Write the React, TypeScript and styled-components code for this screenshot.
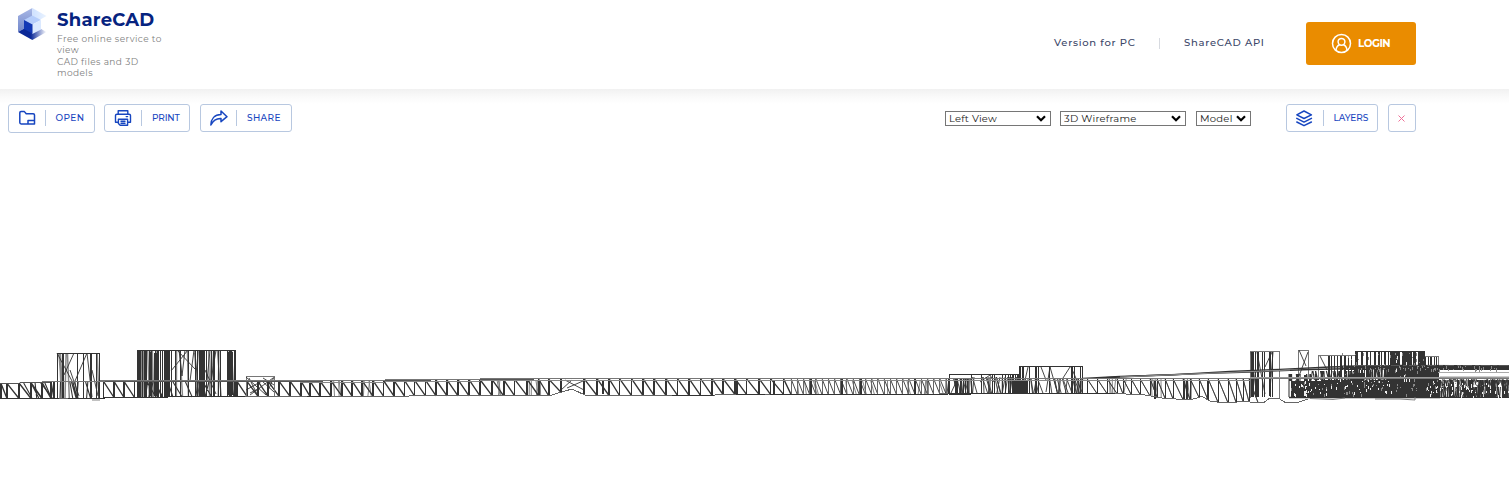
import React from "react";
import styled, { createGlobalStyle } from "styled-components";

const GlobalStyle = createGlobalStyle`
  html, body { margin: 0; background: #fff; overflow: hidden; }
  body { font-family: Montserrat, Inter, "Open Sans", sans-serif; }
  * { box-sizing: border-box; }
`;

const Page = styled.div`
  display: flex;
  flex-direction: column;
  width: 100%;
  height: 487px;
`;
const Header = styled.header`
  display: flex;
  flex: 0 0 89px;
  padding: 0 93px 0 17px;
`;
const Brand = styled.a`
  display: flex;
  align-items: flex-start;
  gap: 10px;
  padding-top: 8px;
`;
const BrandText = styled.div`
  display: flex;
  flex-direction: column;
  width: 125px;
`;
const BrandName = styled.strong`
  height: 25px;
  padding-top: 1px;
  color: #06237f;
  font-size: 18px;
  font-weight: 700;
  line-height: 22px;
  letter-spacing: 0.25px;
`;
const Tagline = styled.span<{ $spacing: number }>`
  color: #808080;
  font-size: 9px;
  line-height: 11.4px;
  letter-spacing: ${(p) => p.$spacing}px;
  white-space: nowrap;
`;
const Nav = styled.nav`
  display: flex;
  align-items: center;
  height: 43px;
  margin: 22px 0 0 auto;
`;
const NavLink = styled.a<{ $width: number; $spacing: number }>`
  width: ${(p) => p.$width}px;
  color: #3b4668;
  font-size: 10px;
  font-weight: 500;
  letter-spacing: ${(p) => p.$spacing}px;
  line-height: 14px;
  padding-bottom: 1px;
  white-space: nowrap;
`;
const NavDivider = styled.i`
  width: 1px;
  height: 11px;
  margin: 0 24px;
  background: #d7dae0;
`;
const LoginButton = styled.button`
  display: flex;
  align-items: center;
  gap: 6px;
  width: 110px;
  height: 43px;
  margin-left: 41px;
  padding: 0 0 0 25px;
  border: 0;
  border-radius: 3px;
  background: #ea8c00;
  color: #fff;
  font: 700 10.3px Montserrat, Inter, sans-serif;
  letter-spacing: -0.45px;
`;
const Toolbar = styled.div`
  display: flex;
  flex: 0 0 51px;
  align-items: flex-start;
  padding: 15px 93px 0 8px;
  background: linear-gradient(#f1f1f1, #fafafa 8px, #fff 15px);
`;
const ToolButton = styled.button<{ $width: number; $height?: number; $gap?: number }>`
  display: flex;
  align-items: center;
  width: ${(p) => p.$width}px;
  height: ${(p) => p.$height ?? 28}px;
  margin-right: ${(p) => p.$gap ?? 0}px;
  padding: 0 0 ${(p) => (p.$height ? 1 : 0)}px 9px;
  border: 1px solid #b8c8e0;
  border-radius: 3px;
  background: #fff;
  color: #1746c0;
`;
const ToolLabel = styled.span<{ $spacing: number; $indent?: number; $offset?: number }>`
  height: 16px;
  margin-left: ${(p) => p.$offset ?? 9}px;
  padding-left: ${(p) => p.$indent ?? 9}px;
  border-left: 1px solid #b8c8e0;
  font: 500 9px/15px Montserrat, Inter, sans-serif;
  letter-spacing: ${(p) => p.$spacing}px;
`;
const CloseButton = styled(ToolButton)`
  justify-content: center;
  padding: 0 1px 0 0;
`;
const Selects = styled.div`
  display: flex;
  margin: 7px 35px 0 auto;
`;
const SelectBox = styled.label<{ $width: number; $gap: number }>`
  display: flex;
  align-items: center;
  width: ${(p) => p.$width}px;
  height: 15px;
  margin-right: ${(p) => p.$gap}px;
  padding: 0 4px 0 3px;
  border: 1px solid #767676;
  background: #fff;
`;
const ViewSelect = styled.select<{ $spacing: number }>`
  flex: 1;
  min-width: 0;
  height: 13px;
  padding: 0;
  border: 0;
  outline: 0;
  appearance: none;
  background: none;
  color: #222;
  font: 400 10px/13px Montserrat, Inter, sans-serif;
  letter-spacing: ${(p) => p.$spacing}px;
`;
const Viewer = styled.main`
  display: flex;
  flex: 1;
  padding-top: 200px;
`;
const Drawing = styled.svg`
  display: block;
  width: 1509px;
  height: 70px;
  flex: none;
`;

function Logo() {
  return (
    <svg width="30" height="33" viewBox="0 0 30 33">
      <defs>
        <linearGradient id="floor" x1="0" x2="1">
          <stop offset=".45" stopColor="#0b2998" />
          <stop offset="1" stopColor="#fff" />
        </linearGradient>
        <linearGradient id="wall" x1="0" y1="0" x2="0" y2="1">
          <stop stopColor="#a9b8e5" />
          <stop offset="1" stopColor="#7187cb" />
        </linearGradient>
        <linearGradient id="roof" x1="0" x2="1">
          <stop stopColor="#cfe1ff" />
          <stop offset=".5" stopColor="#dceaff" />
          <stop offset="1" stopColor="#eaf3ff" />
        </linearGradient>
      </defs>
      <path d="M1 8 15.3 0v16L1 24Z" fill="url(#wall)" />
      <path d="M15.3 0 29.5 8 15.3 16Z" fill="url(#roof)" />
      <path d="M1 24 15.3 16 29.5 24 15.3 32Z" fill="url(#floor)" />
      <path d="m7 12 8.3-4.5 8.7 4.5-8.7 4.5Z" fill="#b5cdfb" />
      <path d="m15.3 16.5 8.7-4.5v9.5l-8.7 4.5Z" fill="#dbe9ff" />
      <path d="m7 12 8.3 4.5v9L7 21Z" fill="#1238b5" />
    </svg>
  );
}

const line = { fill: "none", stroke: "currentColor", strokeWidth: 1.5, strokeLinejoin: "round", strokeLinecap: "round" } as const;

const FolderIcon = () => (
  <svg width="18" height="16" viewBox="0 0 18 16" {...line}>
    <path d="M10 14H3.2Q1.8 14 1.8 12.6V2.8Q1.8 1.6 3 1.6h3.4l1.8 2.2h7q1.3 0 1.3 1.2V14H10V10.4h6.5" />
  </svg>
);
const PrinterIcon = () => (
  <svg width="18" height="16" viewBox="0 0 18 16" {...line} strokeWidth={1.4}>
    <path d="M4.2 4V.8h9.6V4M4 12.2H1.5V5.6q0-1.4 1.4-1.4h12.2q1.4 0 1.4 1.4v6.6h-2.7M4.4 9.2h9.2v6.1H6.2l-1.8-1.8ZM7 11.3h4M7 13.3h4M12.2 6.6h1.4" />
  </svg>
);
const ShareIcon = () => (
  <svg width="18" height="16" viewBox="0 0 18 16" {...line}>
    <path d="M.9 15C1 8.8 4.6 4.5 11 4.4V1l6 5.7-6 5V8.4C6.3 8.2 3 10.5.9 15Z" />
  </svg>
);
const LayersIcon = () => (
  <svg width="18" height="17" viewBox="0 0 18 17" {...line}>
    <path d="m8 1 7.4 3.8L8 8.5.8 4.8ZM.8 8.4 8 12.1l7.4-3.7M.8 12 8 15.7l7.4-3.7" />
  </svg>
);
const UserIcon = () => (
  <svg width="21" height="21" viewBox="0 0 21 21" {...line}>
    <circle cx="10.5" cy="10.5" r="9" />
    <circle cx="10.5" cy="8.8" r="3.4" />
    <path d="M5 17.4c.3-3.2 1.7-5 3.5-5.6M16 17.4c-.3-3.2-1.7-5-3.5-5.6" />
  </svg>
);
const Chevron = () => (
  <svg width="10" height="7" viewBox="0 0 10 7" fill="none" stroke="#000" strokeWidth="2.2">
    <path d="m1 1.3 4 4 4-4" />
  </svg>
);

function Dropdown({ label, width, gap, spacing }: { label: string; width: number; gap: number; spacing: number }) {
  return (
    <SelectBox $width={width} $gap={gap}>
      <ViewSelect $spacing={spacing}><option>{label}</option></ViewSelect>
      <Chevron />
    </SelectBox>
  );
}

let seed = 71;
const rnd = () => {
  seed = (seed * 16807) % 2147483647;
  return seed / 2147483647;
};
const seg = (a: number, b: number, c: number, d: number) =>
  `M${a.toFixed(1)} ${b.toFixed(1)}L${c.toFixed(1)} ${d.toFixed(1)}`;

type Profile = [number, number][];
const at = (p: Profile, x: number) => {
  for (let i = 1; i < p.length; i++) {
    if (x <= p[i][0]) {
      const [a, b] = p[i - 1];
      const [c, d] = p[i];
      return b + ((d - b) * (x - a)) / (c - a);
    }
  }
  return p[p.length - 1][1];
};
const poly = (p: Profile) => "M" + p.map(([x, y]) => `${x} ${y}`).join("L");

const top: Profile = [[0, 383.5], [40, 382.5], [60, 381.5], [300, 381.2], [385, 380.5], [480, 379.5], [580, 378.6], [1509, 378.6]];
const bottom: Profile = [
  [0, 398.5], [100, 398.5], [106, 397.5], [165, 397.5], [170, 396.5], [300, 396.4], [550, 395.5], [572, 389], [586, 395.5], [714, 395.4], [716, 394.5],
  [770, 394.4], [930, 394.4], [948, 393.6], [1113, 393.6], [1142, 394.5], [1162, 398], [1190, 400], [1202, 396.5], [1210, 401], [1220, 402.5],
  [1230, 403], [1245, 401], [1252, 402.5], [1264, 402.5], [1270, 398], [1279, 398.5], [1286, 403], [1298, 402.5], [1308, 399],
];

const posts = [
  1, 7, 19, 31, 42, 51, 54, 103.5, 114, 124, 134.5, 237, 247, 258, 268, 279, 290,
  301, 310, 320, 331, 342, 352, 362, 373, 383.5, 394, 404.5, 414.5, 425.5, 436, 447, 458, 469, 480, 492, 503.5, 514.5,
  527, 538.5, 548.5, 561, 584, 597, 609, 619.5, 631.5, 643, 654, 666, 677.5, 689, 700.5, 712, 723, 735, 746.5, 759, 770.5, 783.5,
];
for (let x = 791; x < 948; x += 6.2) posts.push(x);
posts.push(948, 1087, 1097, 1107, 1117, 1123, 1131, 1140, 1150, 1157, 1165, 1173, 1183, 1190, 1199, 1208, 1218, 1228, 1236, 1243, 1249);

const postLines = (from: number, to: number) =>
  posts.filter((x) => x >= from && x < to).map((x) => seg(x, at(top, x), x, at(bottom, x))).join("");
const diagonalLines = (from: number, to: number) =>
  posts
    .map((x, i) => {
      const next = posts[i + 1] ?? x + 9;
      return x >= from && x < to && next - x < 15 ? seg(x, at(top, x), next, at(bottom, next)) : "";
    })
    .join("");

const hatch = (x0: number, x1: number, y0: number, y1: number, n: number, lean: number) => {
  let d = "";
  for (let i = 0; i < n; i++) {
    const x = x0 + rnd() * (x1 - x0);
    const end = Math.max(x0, Math.min(x1, x + (rnd() - 0.35) * lean));
    d += seg(x, y0, end, y1);
  }
  return d;
};

const verticals = (xs: number[], y0: number, y1: number) => xs.map((x) => seg(x, y0, x, y1)).join("");

const darkPosts =
  verticals([62.5, 63.5, 77.5, 83, 90, 91, 96, 99.5], 353, 398) +
  verticals([137.5, 138.5, 140, 142, 144, 146, 149.5, 151.5, 155, 157, 158, 160, 162, 164, 165, 166, 167, 168, 169], 350, 397) +
  verticals([171.5, 175, 180, 188, 195, 197, 199.5, 201, 202, 203, 204, 206, 211, 213, 214, 218, 220, 227, 229, 230, 231, 234.5], 350, 396) +
  verticals([1019.5, 1020.5, 1022, 1023, 1029, 1035, 1036, 1038, 1049, 1071, 1072, 1074, 1080, 1082.5], 366, 394) +
  verticals([949, 971, 981, 992, 994, 1002, 1005, 1008, 1010, 1012, 1013, 1015, 1017, 1018], 374, 394) +
  verticals([955, 956, 957, 960, 963, 965, 967], 378, 393) +
  verticals([1250, 1251, 1252, 1253, 1255, 1257, 1258, 1262, 1264, 1270, 1272, 1279.5], 351, 397) +
  verticals([1298.5, 1308], 350, 378) +
  verticals([1318, 1328, 1329, 1331, 1334, 1337, 1340, 1341, 1344, 1345, 1348, 1351], 355, 380) +
  verticals([1355, 1356, 1357, 1361, 1362, 1366, 1367, 1370, 1374, 1375, 1378, 1379, 1381, 1384, 1385, 1388, 1390, 1391, 1392, 1394, 1395], 351, 378) +
  verticals([1425, 1428, 1430, 1431, 1434, 1436, 1438.5], 356, 378);

const accents =
  verticals([602.5, 722.8, 737, 773.5], 380, 394) + verticals([503.5, 538.8, 548.7, 583.5], 380, 395) +
  verticals([810.5, 842, 860.5, 915], 379, 394) + verticals([1184, 1187, 1155, 1208], 380, 399);

const outlines =
  "M57 399V353H99.5V399M137 397V350.5H235V396M949 394V374.5H1020M1019.5 394V366.5H1082.5V394" +
  "M1355 378V351.5H1424.5V378";
const softOutlines =
  "M246 396V376.5H274V396M1250 398V351.5H1279.5V398M1298.5 378V350.5H1308V378M1318 378V355.5H1355M1424 356.5H1438.5V378";

const looseLines =
  "M57 353L72 381M64 375L74 353M70 370L79 396M75 381L87 353M87 353L92 397M92 370L98 396M171 371L188 350M177 350L195 369M179 350L182 376L185 350M190 381L194 350M195 353L199 396" +
  "M207 381L210 350M205 370L216 394M216 350L211 381M246 377L266 395L274 377M246 390L262 381L274 392M250 395L273 378M249 378L258 396M263 378L274 385" +
  "M250 393L260 388M572 380L561 390M583 381L567 388M565 380L584 390M951 393L957 380M980 382L990 375L994 382M1023 389L1028 367M1041 367L1046 380M1046 392L1050 367L1057 391M1063 378L1070 367M1071 367L1082 392" +
  "M1251 352L1256 390M1257 352L1265 394M1265 367L1272 352M1273 352L1270 390M1299 376L1308 352M1299 350L1306 366M1320 356L1327 370";

const chordRising: Profile = [[1083, 378.5], [1120, 376.5], [1170, 375], [1230, 371.5], [1280, 369.3], [1330, 367], [1400, 365.5], [1509, 366]];
const chordRising2: Profile = [[1100, 378], [1150, 375.5], [1200, 373.7], [1250, 372], [1310, 369.5], [1380, 368], [1509, 369]];

const blocks: [number, number, number, number][] = [
  [139, 351, 2, 46], [144, 351, 3, 46], [149, 352, 3, 44], [154, 353, 4, 43], [164, 351, 6, 46], [200, 351, 5, 45], [227, 352, 6, 43],
  [1013, 381, 15, 12], [1017, 375, 3, 7], [1256, 379, 3, 18], [1269, 352, 2, 44], [1291, 381, 31, 17], [1289, 374, 3, 7], [1297, 374, 2, 8], [1304, 375, 3, 6],
  [1321, 380, 119, 18], [1353, 373, 12, 24], [1390, 352, 10, 45], [1402, 352, 10, 45], [1387, 370, 37, 10], [1413, 351, 3, 30], [1418, 352, 6, 28], [1424, 366, 15, 32],
];

const clutter =
  hatch(1289, 1322, 374, 397, 18, 6) + hatch(1310, 1355, 371, 380, 32, 4) + hatch(1354, 1392, 368, 382, 34, 4) +
  hatch(1440, 1509, 380, 397, 85, 4) + hatch(1440, 1509, 387, 398, 60, 3);

const fringe = Array.from({ length: 32 }, (_, i) => {
  const x = 1440 + i * 2.2;
  const y = 376 + rnd() * 6;
  return seg(x, y + 4, x + 1, y) + seg(x + 1, y, x + 3, y + 6);
}).join("");

const speckle = (n: number, x0: number, w: number, y0: number, h: number) =>
  Array.from({ length: n }, () => {
    const x = x0 + Math.floor(rnd() * w) + 0.5;
    const y = y0 + Math.floor(rnd() * h);
    return `M${x} ${y}v${1 + Math.floor(rnd() * 3)}`;
  }).join("");
const whiteSpecks = speckle(28, 1292, 36, 381, 14) + speckle(32, 1330, 65, 379, 15) + speckle(8, 1396, 22, 353, 30) + speckle(12, 1425, 15, 380, 16) + speckle(45, 1440, 69, 382, 15);
const graySpecks = speckle(75, 1291, 215, 379, 16) + speckle(35, 1340, 84, 353, 24) + speckle(60, 1340, 165, 366, 4);

function BridgeDrawing() {
  return (
    <Drawing viewBox="0 340 1509 70" fill="none" stroke="#333" strokeWidth=".9" role="img" aria-label="Wireframe model">
      <path d={hatch(59, 99, 354, 398, 6, 7)} stroke="#888" strokeWidth="1.5" />
      <path d={hatch(138, 169, 351, 397, 10, 3)} stroke="#888" strokeWidth="1.4" />
      <path d={hatch(170, 234, 351, 396, 13, 6)} stroke="#888" strokeWidth="1.4" />
      <path d={hatch(951, 972, 379, 393, 14, 6) + hatch(972, 1018, 377, 393, 20, 10)} />
      <path d={hatch(1021, 1082, 378, 393, 26, 9)} />
      <path d={hatch(20, 57, 383, 398, 6, 20) + hatch(60, 99, 382, 398, 9, 10) + hatch(140, 234, 382, 397, 14, 15)} strokeWidth="1.1" />
      <path d={hatch(787, 948, 380, 394, 18, 8)} stroke="#777" />
      <path d={hatch(332, 341, 381, 396, 3, 5) + hatch(362, 372, 381, 396, 3, 5) + hatch(492, 502, 380, 395, 3, 5) + hatch(528, 548, 380, 395, 5, 5) + hatch(1109, 1128, 379, 393, 5, 7) + hatch(1150, 1165, 379, 397, 4, 5) + hatch(1183, 1192, 379, 399, 4, 5)} stroke="#777" />
      <path d={diagonalLines(0, 784)} strokeWidth="1.35" />
      <path d={diagonalLines(784, 1300)} strokeWidth=".9" />
      <path d={diagonalLines(1083, 1300)} strokeWidth=".6" />
      <g shapeRendering="crispEdges">
        <path d={postLines(0, 784)} strokeWidth="1.2" />
        <path d={postLines(784, 948)} stroke="#666" strokeWidth="1" />
        <path d={postLines(948, 1300)} strokeWidth="1" />
        <path d={darkPosts} strokeWidth="1" />
        <path d={softOutlines} stroke="#777" strokeWidth="1" />
        <path d={outlines} strokeWidth="1" />
        <path d={accents} strokeWidth="2" />
        <path d={poly(bottom)} stroke="#666" strokeWidth="1" />
        <path d="M0 398.5H59M68 398.5H105M103 397.5H168M169 396.5H245M307 396.5H331M672 395.5H714M736 394.5H765M949 394.5H971M770 394.5H948M948 393.5H1115" strokeWidth="1" />
      </g>
      {blocks.map(([x, y, w, h], i) => (
        <rect key={i} x={x} y={y} width={w} height={h} fill="#333" stroke="none" />
      ))}
      <path d={looseLines} />
      <path d={clutter} strokeWidth="1.05" />
      <path d={fringe} />
      <path d="M1289 397.5H1440" strokeWidth="1.6" />
      <path d="M1440 397.5H1509" strokeWidth="1" />
      <path d={poly(chordRising)} strokeWidth="1.3" />
      <path d={poly(chordRising2)} strokeWidth="1.3" />
      <path d="M1340 367.8H1509" strokeWidth="4.4" />
      <path d="M1120 377L1240 372L1290 370" stroke="#999" />
      <g shapeRendering="crispEdges" strokeWidth="1">
        <path d={graySpecks} stroke="#888" />
        <path d={whiteSpecks} stroke="#eee" />
        <path d={poly(top)} stroke="#555" />
        <path d="M42 381.5H105M100 380.5H385" stroke="#777" />
        <path d="M300 382.5H384M385 381.5H480M480 380.5H1250" stroke="#888" />
        <path d="M385 379.5H480M480 378.5H1509" stroke="#777" />
        <path d="M1250 377.5H1509" stroke="#999" />
        <path d="M1355 365.5H1509" stroke="#555" strokeDasharray="9 3 4 2" />
        <path d="M1438 372.5H1509" stroke="#aaa" />
        <path d="M1440 376.5H1509" stroke="#ccc" />
      </g>
      <path d="M92 400H100M1310 398.5L1333 399.5L1345 398M1375 399H1400L1415 400V397" stroke="#777" />
    </Drawing>
  );
}

export default function App() {
  return (
    <Page>
      <GlobalStyle />
      <Header>
        <Brand>
          <Logo />
          <BrandText>
            <BrandName>ShareCAD</BrandName>
            <Tagline $spacing={0.42}>Free online service to</Tagline>
            <Tagline $spacing={0.4}>view</Tagline>
            <Tagline $spacing={0.41}>CAD files and 3D</Tagline>
            <Tagline $spacing={0.4}>models</Tagline>
          </BrandText>
        </Brand>
        <Nav>
          <NavLink $width={81} $spacing={0.73}>Version for PC</NavLink>
          <NavDivider />
          <NavLink $width={81} $spacing={0.73}>ShareCAD API</NavLink>
          <LoginButton><UserIcon />LOGIN</LoginButton>
        </Nav>
      </Header>
      <Toolbar>
        <ToolButton $width={87} $height={29} $gap={9}><FolderIcon /><ToolLabel $spacing={0.4} $indent={9.5}>OPEN</ToolLabel></ToolButton>
        <ToolButton $width={86} $gap={10}><PrinterIcon /><ToolLabel $spacing={-0.15} $indent={10}>PRINT</ToolLabel></ToolButton>
        <ToolButton $width={92}><ShareIcon /><ToolLabel $spacing={0.35} $offset={8} $indent={10}>SHARE</ToolLabel></ToolButton>
        <Selects>
          <Dropdown label="Left View" width={106} gap={9} spacing={0.2} />
          <Dropdown label="3D Wireframe" width={126} gap={10} spacing={0.25} />
          <Dropdown label="Model" width={55} gap={0} spacing={0.25} />
        </Selects>
        <ToolButton $width={92} $gap={10}><LayersIcon /><ToolLabel $spacing={-0.1} $indent={9.5}>LAYERS</ToolLabel></ToolButton>
        <CloseButton $width={28} aria-label="Close">
          <svg width="7" height="7" viewBox="0 0 7 7" stroke="#ef7098" strokeWidth="1"><path d="m.5.5 6 6M6.5.5l-6 6" /></svg>
        </CloseButton>
      </Toolbar>
      <Viewer><BridgeDrawing /></Viewer>
    </Page>
  );
}
